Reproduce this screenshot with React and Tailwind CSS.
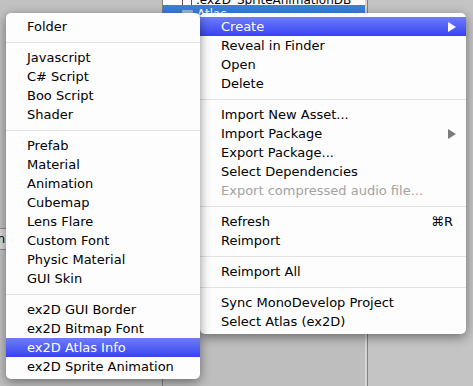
const leftItems = [
  ['Folder'],
  null,
  ['Javascript'],
  ['C# Script'],
  ['Boo Script'],
  ['Shader'],
  null,
  ['Prefab'],
  ['Material'],
  ['Animation'],
  ['Cubemap'],
  ['Lens Flare'],
  ['Custom Font'],
  ['Physic Material'],
  ['GUI Skin'],
  null,
  ['ex2D GUI Border'],
  ['ex2D Bitmap Font'],
  ['ex2D Atlas Info', 'active'],
  ['ex2D Sprite Animation'],
];

const rightItems = [
  ['Create', 'active', 'sub'],
  ['Reveal in Finder'],
  ['Open'],
  ['Delete'],
  null,
  ['Import New Asset...'],
  ['Import Package', '', 'sub'],
  ['Export Package...'],
  ['Select Dependencies'],
  ['Export compressed audio file...', 'disabled'],
  null,
  ['Refresh', '', '⌘R'],
  ['Reimport'],
  null,
  ['Reimport All'],
  null,
  ['Sync MonoDevelop Project'],
  ['Select Atlas (ex2D)'],
];

function Arrow({ color }) {
  return (
    <svg width="8" height="10" viewBox="0 0 8 10" className="shrink-0">
      <path d="M0 0 L8 5 L0 10 Z" fill={color} />
    </svg>
  );
}

function Menu({ items, className }) {
  return (
    <div className={`absolute bg-[#fdfdfd] rounded-[5px] pt-[4px] pb-[3px] shadow-[0_3px_11px_rgba(0,0,0,0.45)] ${className}`}>
      {items.map((it, i) => {
        if (!it) {
          return (
            <div key={i} className="h-[12px] flex items-center">
              <div className="h-px w-full bg-[#e2e2e2]" />
            </div>
          );
        }
        const [label, state, extra] = it;
        const active = state === 'active';
        const disabled = state === 'disabled';
        return (
          <div
            key={i}
            className={`h-[19px] flex items-center pl-[21px] leading-[19px] whitespace-nowrap ${
              active ? 'bg-gradient-to-b from-[#6f7cf8] to-[#3a40f2] text-white' : disabled ? 'text-[#a3a3a3]' : 'text-black'
            } ${extra === 'sub' ? 'pr-[10px]' : 'pr-[13px]'}`}
          >
            <span className="flex-1 -mt-px">{label}</span>
            {extra === 'sub' && <Arrow color={active ? '#ffffff' : '#7b7b7b'} />}
            {extra && extra !== 'sub' && <span className="-mt-px">{extra}</span>}
          </div>
        );
      })}
    </div>
  );
}

export default function App() {
  return (
    <div className="relative w-[473px] h-[386px] overflow-hidden bg-[#c0c0c0] font-['DejaVu_Sans',sans-serif] text-[13px]">
      <div className="flex h-full">
        <div className="w-[162px] flex flex-col bg-[#c1c1c1]">
          <div className="mt-[228px] h-[22px] border-y border-[#8e8e8e] bg-[#dadada] overflow-hidden text-[12px] leading-[20px] text-black">
            <span className="block -ml-[24px]">Scan</span>
          </div>
        </div>
        <div className="w-px bg-[#7e7e7e]" />
        <div className="w-[202px] flex flex-col bg-[#bdbdbd]">
          <div className="bg-white h-[5px] relative overflow-hidden">
            <div className="flex items-end h-[5px] pl-[19px] gap-[4px]">
              <div className="w-[10px] h-[12px] border border-[#555] bg-white shrink-0 mb-[-1px]" />
              <span className="text-[12px] leading-[12px] text-black whitespace-nowrap mb-[-1px]">.ex2D_SpriteAnimationDB</span>
            </div>
          </div>
          <div className="bg-[#3d7fdc] h-[20px] flex items-start pl-[19px] pt-[3px] gap-[4px]">
            <div className="w-[11px] h-[8px] bg-[#9fb9dc] rounded-[1px] mt-[2px]" />
            <span className="text-[12px] leading-[12px] text-white">Atlas</span>
          </div>
          <div className="flex-1 bg-[#bebebe]" />
        </div>
        <div className="w-[2px] bg-[#d6d6d6]" />
        <div className="w-px bg-[#7f7f7f]" />
        <div className="flex-1 bg-[#c4c4c4]" />
      </div>

      <Menu items={rightItems} className="left-[200px] top-[13px] w-[266px]" />
      <Menu items={leftItems} className="left-[6px] top-[13px] w-[194px]" />
    </div>
  );
}
